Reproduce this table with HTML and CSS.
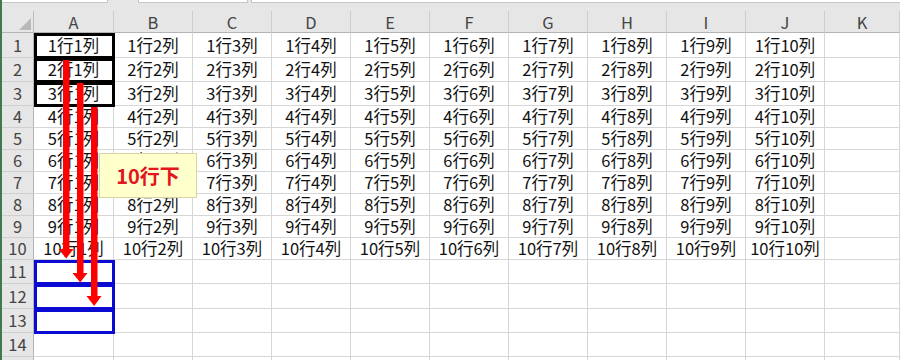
FILE: index.html
```html
<!DOCTYPE html>
<html lang="ja">
<head>
<meta charset="utf-8">
<title>Sheet</title>
<link rel="stylesheet" href="styles.css">
</head>
<body>
<div class="app">
  <div class="edge"></div>
  <div class="main">
    <div class="topbar">
      <div class="namebox"></div>
      <div class="fxbox"></div>
      <div class="formula"></div>
    </div>
    <div class="sheet">
      <div class="corner"><span class="tri"></span></div>
      <div class="ch">A</div><div class="ch">B</div><div class="ch">C</div><div class="ch">D</div><div class="ch">E</div><div class="ch">F</div><div class="ch">G</div><div class="ch">H</div><div class="ch">I</div><div class="ch">J</div><div class="ch">K</div>

      <div class="rh">1</div><div class="cell blk">1行1列</div><div class="cell">1行2列</div><div class="cell">1行3列</div><div class="cell">1行4列</div><div class="cell">1行5列</div><div class="cell">1行6列</div><div class="cell">1行7列</div><div class="cell">1行8列</div><div class="cell">1行9列</div><div class="cell">1行10列</div><div class="cell"></div>
      <div class="rh">2</div><div class="cell blk">2行1列</div><div class="cell">2行2列</div><div class="cell">2行3列</div><div class="cell">2行4列</div><div class="cell">2行5列</div><div class="cell">2行6列</div><div class="cell">2行7列</div><div class="cell">2行8列</div><div class="cell">2行9列</div><div class="cell">2行10列</div><div class="cell"></div>
      <div class="rh">3</div><div class="cell blk">3行1列</div><div class="cell">3行2列</div><div class="cell">3行3列</div><div class="cell">3行4列</div><div class="cell">3行5列</div><div class="cell">3行6列</div><div class="cell">3行7列</div><div class="cell">3行8列</div><div class="cell">3行9列</div><div class="cell">3行10列</div><div class="cell"></div>
      <div class="rh">4</div><div class="cell">4行1列</div><div class="cell">4行2列</div><div class="cell">4行3列</div><div class="cell">4行4列</div><div class="cell">4行5列</div><div class="cell">4行6列</div><div class="cell">4行7列</div><div class="cell">4行8列</div><div class="cell">4行9列</div><div class="cell">4行10列</div><div class="cell"></div>
      <div class="rh">5</div><div class="cell">5行1列</div><div class="cell">5行2列</div><div class="cell">5行3列</div><div class="cell">5行4列</div><div class="cell">5行5列</div><div class="cell">5行6列</div><div class="cell">5行7列</div><div class="cell">5行8列</div><div class="cell">5行9列</div><div class="cell">5行10列</div><div class="cell"></div>
      <div class="rh">6</div><div class="cell">6行1列</div><div class="cell">6行2列</div><div class="cell">6行3列</div><div class="cell">6行4列</div><div class="cell">6行5列</div><div class="cell">6行6列</div><div class="cell">6行7列</div><div class="cell">6行8列</div><div class="cell">6行9列</div><div class="cell">6行10列</div><div class="cell"></div>
      <div class="rh">7</div><div class="cell">7行1列</div><div class="cell">7行2列</div><div class="cell">7行3列</div><div class="cell">7行4列</div><div class="cell">7行5列</div><div class="cell">7行6列</div><div class="cell">7行7列</div><div class="cell">7行8列</div><div class="cell">7行9列</div><div class="cell">7行10列</div><div class="cell"></div>
      <div class="rh">8</div><div class="cell">8行1列</div><div class="cell">8行2列</div><div class="cell">8行3列</div><div class="cell">8行4列</div><div class="cell">8行5列</div><div class="cell">8行6列</div><div class="cell">8行7列</div><div class="cell">8行8列</div><div class="cell">8行9列</div><div class="cell">8行10列</div><div class="cell"></div>
      <div class="rh">9</div><div class="cell">9行1列</div><div class="cell">9行2列</div><div class="cell">9行3列</div><div class="cell">9行4列</div><div class="cell">9行5列</div><div class="cell">9行6列</div><div class="cell">9行7列</div><div class="cell">9行8列</div><div class="cell">9行9列</div><div class="cell">9行10列</div><div class="cell"></div>
      <div class="rh">10</div><div class="cell">10行1列</div><div class="cell">10行2列</div><div class="cell">10行3列</div><div class="cell">10行4列</div><div class="cell">10行5列</div><div class="cell">10行6列</div><div class="cell">10行7列</div><div class="cell">10行8列</div><div class="cell">10行9列</div><div class="cell">10行10列</div><div class="cell"></div>
      <div class="rh">11</div><div class="cell blu"></div><div class="cell"></div><div class="cell"></div><div class="cell"></div><div class="cell"></div><div class="cell"></div><div class="cell"></div><div class="cell"></div><div class="cell"></div><div class="cell"></div><div class="cell"></div>
      <div class="rh">12</div><div class="cell blu"></div><div class="cell"></div><div class="cell"></div><div class="cell"></div><div class="cell"></div><div class="cell"></div><div class="cell"></div><div class="cell"></div><div class="cell"></div><div class="cell"></div><div class="cell"></div>
      <div class="rh">13</div><div class="cell blu"></div><div class="cell"></div><div class="cell"></div><div class="cell"></div><div class="cell"></div><div class="cell"></div><div class="cell"></div><div class="cell"></div><div class="cell"></div><div class="cell"></div><div class="cell"></div>
      <div class="rh">14</div><div class="cell"></div><div class="cell"></div><div class="cell"></div><div class="cell"></div><div class="cell"></div><div class="cell"></div><div class="cell"></div><div class="cell"></div><div class="cell"></div><div class="cell"></div><div class="cell"></div>
      <div class="rh"></div><div class="cell"></div><div class="cell"></div><div class="cell"></div><div class="cell"></div><div class="cell"></div><div class="cell"></div><div class="cell"></div><div class="cell"></div><div class="cell"></div><div class="cell"></div><div class="cell"></div>
    </div>
  </div>

  <svg class="arrows" width="900" height="360" viewBox="0 0 900 360" aria-hidden="true">
    <g fill="#ff0000">
      <rect x="63" y="60" width="6.5" height="190"/>
      <polygon points="58.5,249 73.5,249 66.2,258.5"/>
      <rect x="77" y="83" width="6.5" height="191"/>
      <polygon points="72.5,273 87.5,273 80.2,282.5"/>
      <rect x="91" y="107" width="6.5" height="190"/>
      <polygon points="86.5,296 101.5,296 94.2,306"/>
    </g>
  </svg>

  <div class="callout">10行下</div>
</div>
</body>
</html>
```

FILE: styles.css
```css
html, body {
  margin: 0;
  padding: 0;
  background: #ffffff;
}

body {
  width: 900px;
  height: 360px;
  overflow: hidden;
  font-family: "Noto Sans CJK JP", "Noto Sans", sans-serif;
}

.app {
  position: relative;
  display: flex;
  width: 900px;
  height: 360px;
  overflow: hidden;
}

.edge {
  width: 2px;
  flex: none;
  background: #3f7a4f;
}

.main {
  flex: 1;
  display: flex;
  flex-direction: column;
  min-width: 0;
}

.topbar {
  height: 11px;
  flex: none;
  display: flex;
  align-items: flex-start;
  background: #e6e6e6;
}

.namebox {
  width: 105px;
  height: 2px;
  background: #ffffff;
  border-right: 1px solid #c6c6c6;
  border-bottom: 1px solid #c6c6c6;
}

.fxbox {
  margin-left: 30px;
  width: 108px;
  height: 2px;
  background: #ffffff;
  border-left: 1px solid #c6c6c6;
  border-right: 1px solid #c6c6c6;
  border-bottom: 1px solid #c6c6c6;
}

.formula {
  margin-left: 3px;
  flex: 1;
  height: 2px;
  background: #ffffff;
  border-left: 1px solid #c6c6c6;
  border-bottom: 1px solid #c6c6c6;
}

.sheet {
  display: grid;
  grid-template-columns: 32px 80px repeat(9, 79px) 1fr;
  grid-template-rows: 22px 25px 24px 24px repeat(7, 22px) 24px 25px 24px 24px 24px;
}

.corner {
  position: relative;
  background: #e6e6e6;
  border-right: 1px solid #bcbcbc;
  border-bottom: 1px solid #b4b4b4;
  box-sizing: border-box;
}

.tri {
  position: absolute;
  right: 2px;
  bottom: 2px;
  width: 0;
  height: 0;
  border-left: 12px solid transparent;
  border-bottom: 12px solid #b9b9b9;
}

.ch {
  box-sizing: border-box;
  background: #e6e6e6;
  border-right: 1px solid #cdcdcd;
  border-bottom: 1px solid #b4b4b4;
  color: #444444;
  font-size: 16.5px;
  line-height: 1;
  display: flex;
  align-items: center;
  justify-content: center;
  padding-top: 1px;
}

.rh {
  box-sizing: border-box;
  background: #e6e6e6;
  border-right: 1px solid #b4b4b4;
  border-bottom: 1px solid #d0d0d0;
  color: #444444;
  font-size: 16.5px;
  line-height: 1;
  display: flex;
  align-items: center;
  justify-content: center;
}

.cell {
  box-sizing: border-box;
  border-right: 1px solid #d6d6d6;
  border-bottom: 1px solid #d6d6d6;
  color: #111111;
  font-size: 16.5px;
  line-height: 1;
  display: flex;
  align-items: center;
  justify-content: center;
  white-space: nowrap;
  overflow: visible;
  position: relative;
}

.blk::after,
.blu::after {
  content: "";
  position: absolute;
  left: 0;
  top: 0;
  right: -2px;
  bottom: -2px;
  border: 3px solid #000000;
  pointer-events: none;
  z-index: 1;
}

.blu::after {
  border-color: #0a0ad2;
}

.arrows {
  position: absolute;
  left: 0;
  top: 0;
  z-index: 3;
  pointer-events: none;
}

.callout {
  position: absolute;
  left: 99px;
  top: 153px;
  width: 98px;
  height: 45px;
  box-sizing: border-box;
  background: #ffffcc;
  border: 1px solid #d9d3a4;
  color: #e3151d;
  font-weight: bold;
  font-size: 20px;
  display: flex;
  align-items: center;
  justify-content: center;
  z-index: 4;
}
```
